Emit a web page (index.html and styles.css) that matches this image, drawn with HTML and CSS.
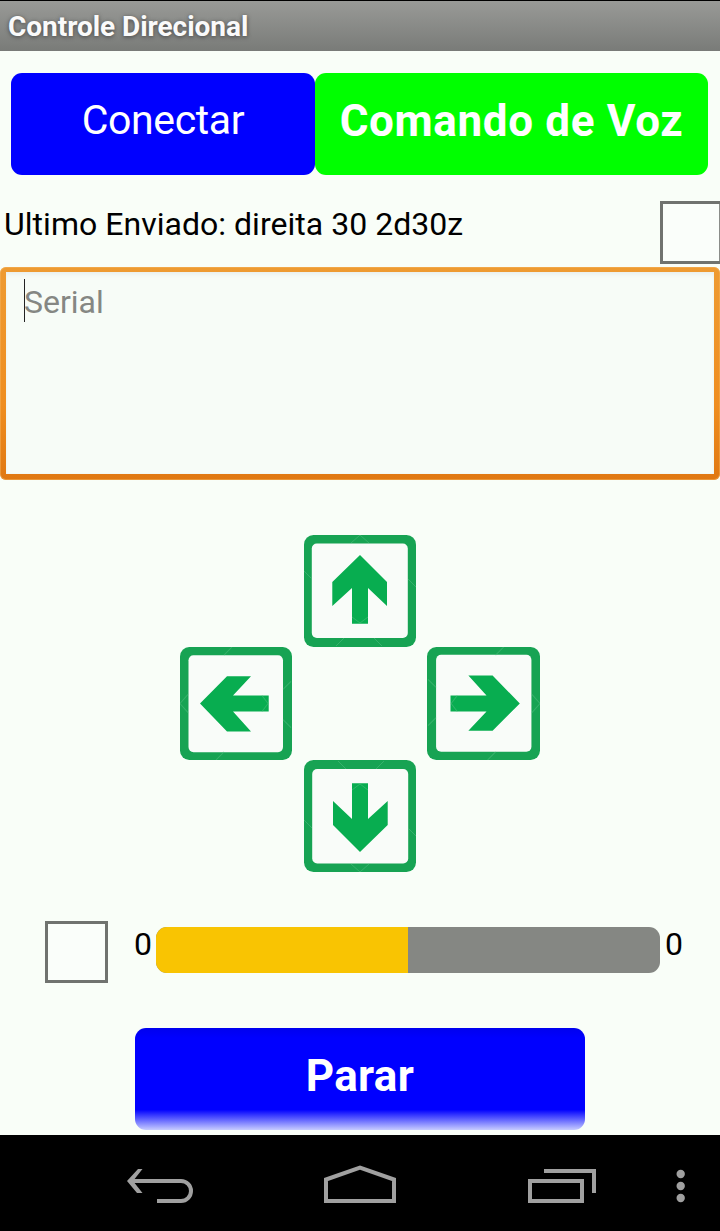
FILE: index.html
```html
<!DOCTYPE html>
<html lang="pt-BR">
<head>
<meta charset="utf-8">
<title>Controle Direcional</title>
<link rel="stylesheet" href="styles.css">
</head>
<body>
<svg class="defs" aria-hidden="true">
  <symbol id="arrow" viewBox="0 0 112 112" preserveAspectRatio="none">
    <rect width="112" height="112" rx="9.5" fill="#17a353"/>
    <rect x="7.8" y="8.5" width="96" height="94.5" rx="5" fill="#f9fcf9"/>
    <path d="M56 20L83 47V71L64 53V88.700H48V53L28.300 71V47Z" fill="#08ad50"/>
    <path d="M47 8L56 0L65 8M0 36L8 44M104 44L112 52M32 111L40 103M70 103L78 111M48 82L56 88L64 82" fill="none" stroke="#4bba7b" stroke-width="1" opacity=".6"/>
  </symbol>
</svg>
<header class="titlebar"><h1 class="title">Controle Direcional</h1></header>
<main class="screen">
  <div class="actions">
    <button class="btn connect"><span class="connect-text">Conectar</span></button>
    <button class="btn voice"><span class="voice-text">Comando de Voz</span></button>
  </div>
  <div class="status">
    <span class="label status-text">Ultimo Enviado: direita 30 2d30z</span>
    <span class="check"></span>
  </div>
  <div class="field"><div class="field-inner"><span class="caret"></span><span class="label hint">Serial</span></div></div>
  <div class="pad">
    <svg class="tile up"><use href="#arrow"/></svg>
    <svg class="tile left"><use href="#arrow"/></svg>
    <svg class="tile right"><use href="#arrow"/></svg>
    <svg class="tile down"><use href="#arrow"/></svg>
  </div>
  <div class="speed">
    <span class="check"></span>
    <span class="label value first">0</span>
    <div class="slider"><div class="slider-fill" style="width:50%"></div></div>
    <span class="label value last">0</span>
  </div>
  <button class="btn stop"><span class="stop-text">Parar</span></button>
</main>
<nav class="navbar">
  <svg width="720" height="96" viewBox="0 1135 720 96" fill="none" stroke="#a0a0a0" stroke-width="4">
    <path d="M157 1201H181A10 10 0 0 0 181 1181H130"/>
    <path d="M138 1169H142.500L133 1181L142.500 1193H137L127 1181Z" fill="#a0a0a0" stroke="none"/>
    <path d="M326 1201V1179.500L360 1167.500L394 1179.500V1201Z"/>
    <path d="M530 1181H582V1201H530ZM544 1171H594V1193"/>
    <g fill="#a0a0a0" stroke="none"><circle cx="680.700" cy="1174" r="4.200"/><circle cx="680.700" cy="1186" r="4.200"/><circle cx="680.700" cy="1198" r="4.200"/></g>
  </svg>
</nav>
</body>
</html>
```

FILE: styles.css
```css
* { box-sizing: border-box; }
body { margin: 0; width: 720px; height: 1231px; overflow: hidden; display: flex; flex-direction: column; background: #f9fef8; font-family: Roboto, "Liberation Sans", sans-serif; }
.defs { display: none; }
.titlebar { flex: none; height: 51px; padding: 9px 8px 0; border-top: 1px solid #000; background: linear-gradient(#999a97, #797b78); }
.title { margin: 0; font-size: 28px; line-height: 34px; font-weight: 700; letter-spacing: -0.04px; color: #fafafa; text-shadow: 0 1px 4px #444; white-space: nowrap; }
.screen { height: 1084px; display: flex; flex-direction: column; }
.actions { display: flex; margin: 22px 12px 0 11px; }
.btn { height: 102px; padding: 0 0 6px; border: 0; border-radius: 11px; font-family: inherit; color: #fff; white-space: nowrap; }
.connect { width: 304px; padding-bottom: 8px; background: #00f; font-size: 41px; letter-spacing: -0.4px; }
.voice { width: 393px; background: #0f0; font-size: 44px; font-weight: 700; letter-spacing: 0.65px; }
.status { height: 63px; margin-top: 26px; display: flex; justify-content: space-between; overflow: hidden; }
.label { font-size: 32px; line-height: 38px; color: #000; white-space: nowrap; }
.status-text { padding: 4px 0 0 4px; letter-spacing: 0.03px; }
.check { flex: none; width: 63px; height: 62px; border: 3px solid #70736f; background: #fafefa; }
.status .check { height: 63px; margin-right: -3px; box-shadow: inset -1px 0 0 #8a8d89; width: 63px; }
.field { height: 213px; margin-top: 3px; padding: 5px 6px 6px; border-radius: 6px; background: linear-gradient(#ee9b32, #ef8e20 65%, #e07812); box-shadow: inset 0 0 0 1px #f4b35e80; }
.field-inner { height: 100%; padding: 7px 0 0 18px; display: flex; align-items: flex-start; background: #f7fcf7; box-shadow: inset 0 4px 5px -2px #e8eeed, inset 0 0 2px #e8eeed; }
.caret { width: 1px; height: 43px; background: #222; }
.hint { margin: 4px 0 0 -1px; color: #858783; }
.pad { margin: 55px 0 0 180px; display: grid; grid-template-columns: 112px 12px 112px 11px 113px; grid-template-rows: 112px 113px 112px; }
.tile { width: 112px; height: 112px; }
.up { grid-area: 1 / 3; }
.left { grid-area: 2 / 1; transform: translateY(.5px) rotate(-90deg) scaleX(1.009); }
.right { grid-area: 2 / 5; transform: translate(.5px, .5px) rotate(90deg) scale(1.009); }
.down { grid-area: 3 / 3; transform: rotate(180deg); }
.speed { display: flex; margin: 49px 0 0 45px; height: 62px; }
.value { padding-top: 4px; }
.first { width: 48px; padding-left: 26px; }
.slider { width: 504px; height: 46px; margin-top: 6px; border-radius: 11px; background: #858783; overflow: hidden; }
.slider-fill { height: 100%; background: #f9c402; }
.last { padding-left: 5px; }
.stop { width: 450px; height: 102px; margin: 45px 0 0 135px; font-size: 44px; font-weight: 700; letter-spacing: 0.35px; background: linear-gradient(#00e 0, #00f 10%, #00f 80%, #c8cdff 100%); }
.navbar { height: 96px; background: #000; }
.navbar svg { display: block; }
```
